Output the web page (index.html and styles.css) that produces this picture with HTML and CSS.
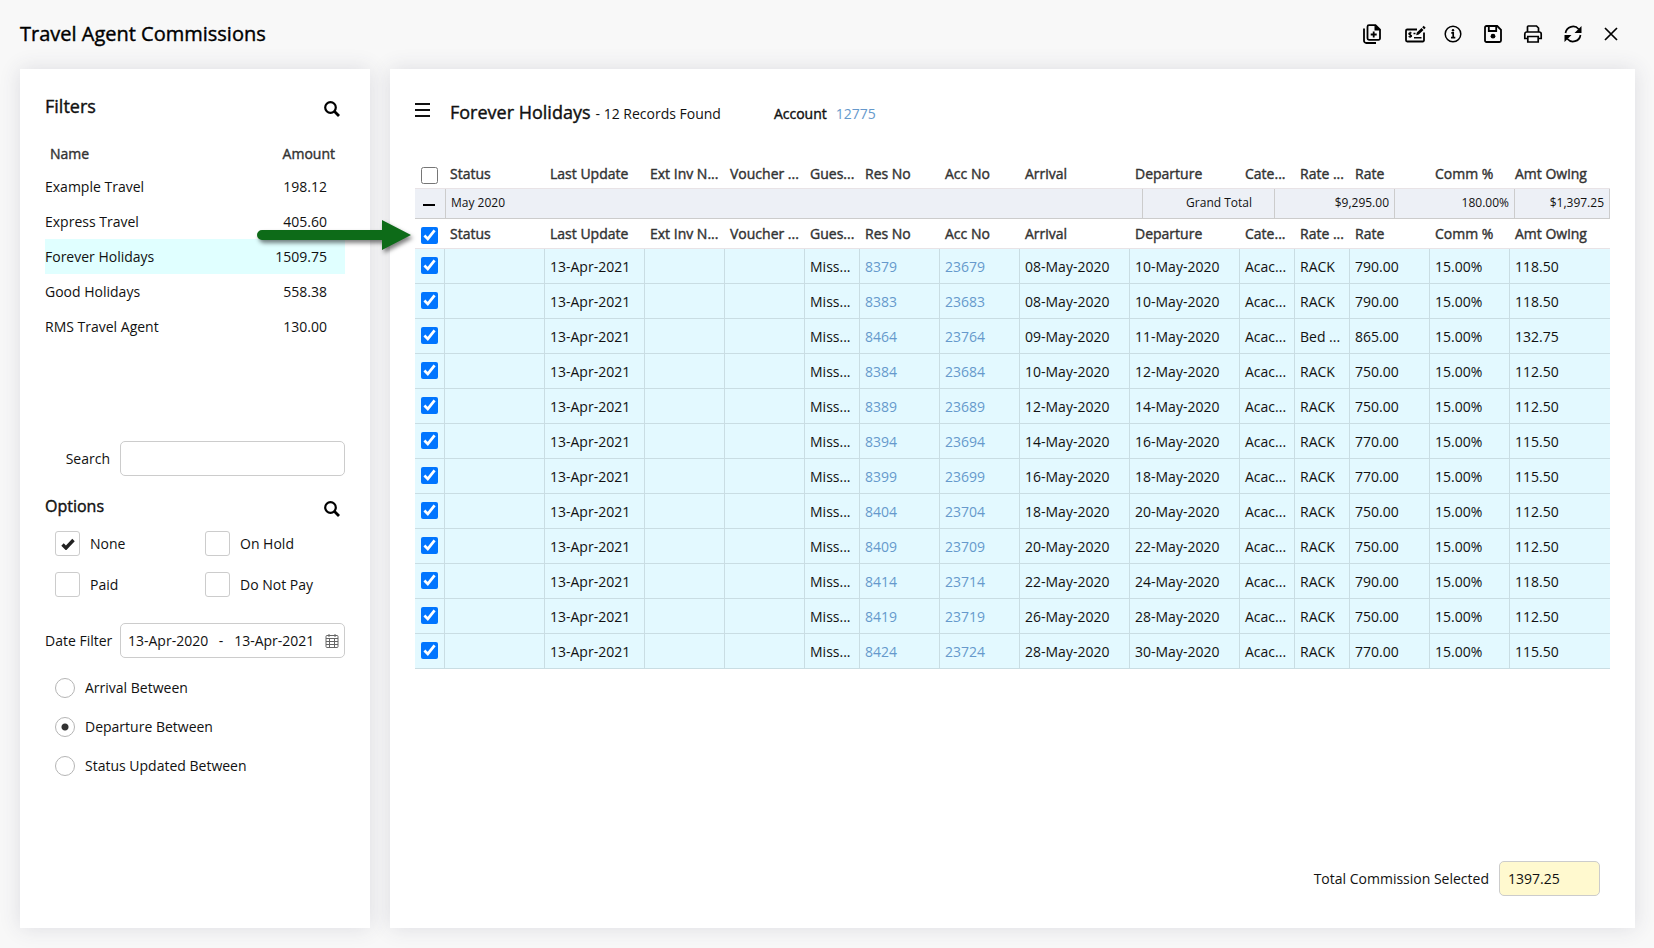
FILE: index.html
```html
<!DOCTYPE html>
<html lang="en">
<head>
  <meta charset="UTF-8" />
  <meta name="viewport" content="width=device-width, initial-scale=1.0" />
  <title>Travel Agent Commissions</title>
  <link rel="stylesheet" href="styles.css">
</head>
<body>
  <header class="topbar">
    <h1>Travel Agent Commissions</h1>
    <div class="toolbar">
      <button type="button" class="icon-btn" aria-label="Add report">
        <svg width="22" height="22" viewBox="0 0 22 22" fill="none" stroke="#000" stroke-width="1.800">
          <path d="M7 2.200h6.500L18 6.700v8.600a1.500 1.500 0 0 1-1.500 1.500H7a1.500 1.500 0 0 1-1.500-1.500V3.700A1.500 1.500 0 0 1 7 2.200z" />
          <path d="M12.500 2v5.500h6z" fill="#000" stroke="none" />
          <path d="M11.700 8.500v6M8.700 11.500h6" />
          <path d="M2 5.500v12A2.300 2.300 0 0 0 4.300 20H14" />
        </svg>
      </button>
      <button type="button" class="icon-btn" aria-label="Write cheque">
        <svg width="22" height="22" viewBox="-2 0 22 22" fill="none" stroke="#000" stroke-width="1.800">
          <path d="M13 6.500H3.200A1.200 1.200 0 0 0 2 7.700v9.600a1.200 1.200 0 0 0 1.200 1.200h15.600a1.200 1.200 0 0 0 1.200-1.200V9.500" />
          <path d="M7.600 10.200c-.5-.5-2.800-.6-2.800.6 0 1.300 2.800.7 2.800 2.100 0 1.200-2.300 1.200-3 .5M6.200 8.800v6" stroke-width="1.200" />
          <path d="M9.500 10.500h2M10 14.700h7.500" stroke-width="1.600" />
          <path d="M12.200 12.200l.6-2.600 4.700-4.700 2 2-4.700 4.700zM18.200 4.200l1.500-1.500 2 2-1.500 1.500z" fill="#000" stroke="none" />
        </svg>
      </button>
      <button type="button" class="icon-btn" aria-label="Information">
        <svg width="22" height="22" viewBox="0 0 22 22" fill="none" stroke="#000" stroke-width="1.500">
          <circle cx="11" cy="11" r="7.800" />
          <path d="M9.300 9.800h1.900v4.700M9 14.700h4.300" stroke-width="1.700" />
          <circle cx="11" cy="7.200" r="1.200" fill="#000" stroke="none" />
        </svg>
      </button>
      <button type="button" class="icon-btn" aria-label="Save">
        <svg width="22" height="22" viewBox="0 0 22 22" fill="none" stroke="#000" stroke-width="1.800">
          <path d="M4.500 3h10.700L19 6.800v10.700a1.500 1.500 0 0 1-1.500 1.500h-13A1.500 1.500 0 0 1 3 17.500v-13A1.500 1.500 0 0 1 4.500 3z" />
          <path d="M6.800 3v5h7.400V3" />
          <circle cx="11" cy="13.200" r="2.400" fill="#000" stroke="none" />
        </svg>
      </button>
      <button type="button" class="icon-btn" aria-label="Print">
        <svg width="22" height="22" viewBox="0 0 22 22" fill="none" stroke="#000" stroke-width="1.700">
          <path d="M5.500 9V3.800A.8.8 0 0 1 6.300 3h8.200l2 2v4" />
          <path d="M5.500 15.500H2.800V11A2 2 0 0 1 4.800 9h12.400a2 2 0 0 1 2 2v4.500h-2.700" />
          <path d="M5.800 13.500h10.400V19H5.800z" />
        </svg>
      </button>
      <button type="button" class="icon-btn" aria-label="Refresh">
        <svg width="22" height="22" viewBox="0 0 22 22" fill="none" stroke="#000" stroke-width="1.700">
          <path d="M3.500 10A7.600 7.600 0 0 1 16.800 6.200M18.500 12A7.600 7.600 0 0 1 5.200 15.800" />
          <path d="M19.500 3v7h-7zM2.500 19v-7h7z" fill="#000" stroke="none" />
        </svg>
      </button>
      <button type="button" class="icon-btn" aria-label="Close">
        <svg width="18" height="22" viewBox="0 0 18 22" fill="none" stroke="#000" stroke-width="1.700">
          <path d="M3 5l12 12M15 5L3 17" />
        </svg>
      </button>
    </div>
  </header>

  <main class="layout">
    <aside class="panel filters">
      <div class="panel-head">
        <h2>Filters</h2>
        <button type="button" class="icon-btn" aria-label="Search filters">
          <svg width="16" height="16" viewBox="0 0 16 16" fill="none" stroke="#000">
            <circle cx="6.500" cy="6.500" r="5.300" stroke-width="2.200" />
            <path d="M10.300 10.300l4.700 4.700" stroke-width="2.800" />
          </svg>
        </button>
      </div>

      <div class="agents">
        <table class="agent-table">
          <thead>
            <tr><th>Name</th><th>Amount</th></tr>
          </thead>
          <tbody>
            <tr><td>Example Travel</td><td>198.12</td></tr>
            <tr><td>Express Travel</td><td>405.60</td></tr>
            <tr class="selected"><td>Forever Holidays</td><td>1509.75</td></tr>
            <tr><td>Good Holidays</td><td>558.38</td></tr>
            <tr><td>RMS Travel Agent</td><td>130.00</td></tr>
          </tbody>
        </table>
      </div>

      <div class="field">
        <label class="search-label" for="search">Search</label>
        <input type="text" id="search" class="text-input" />
      </div>

      <div class="panel-head options-head">
        <h3>Options</h3>
        <button type="button" class="icon-btn" aria-label="Search options">
          <svg width="16" height="16" viewBox="0 0 16 16" fill="none" stroke="#000">
            <circle cx="6.500" cy="6.500" r="5.300" stroke-width="2.200" />
            <path d="M10.300 10.300l4.700 4.700" stroke-width="2.800" />
          </svg>
        </button>
      </div>

      <div class="options">
        <label><input type="checkbox" class="box" checked />None</label>
        <label><input type="checkbox" class="box" />On Hold</label>
        <label><input type="checkbox" class="box" />Paid</label>
        <label><input type="checkbox" class="box" />Do Not Pay</label>
      </div>

      <div class="field">
        <label for="date-from">Date Filter</label>
        <div class="date-range">
          <input type="text" id="date-from" value="13-Apr-2020" />
          <span>-</span>
          <input type="text" id="date-to" aria-label="Date to" value="13-Apr-2021" />
          <button type="button" class="icon-btn" aria-label="Open calendar">
            <svg width="14" height="16" viewBox="0 0 14 16" fill="none" stroke="#666">
              <path d="M2 2.500h10a1 1 0 0 1 1 1v10a1 1 0 0 1-1 1H2a1 1 0 0 1-1-1v-10a1 1 0 0 1 1-1zM1 5.500h12M1 8.500h12M1 11.500h12M4.500 5.500v9M9.500 5.500v9" />
              <path d="M4 1v3M10 1v3" />
            </svg>
          </button>
        </div>
      </div>

      <div class="radios">
        <label><input type="radio" name="between" />Arrival Between</label>
        <label><input type="radio" name="between" checked />Departure Between</label>
        <label><input type="radio" name="between" />Status Updated Between</label>
      </div>
    </aside>

    <section class="panel results">
      <div class="results-head">
        <button type="button" class="icon-btn" aria-label="Menu">
          <svg width="15" height="16" viewBox="0 0 15 16" stroke="#111" stroke-width="2">
            <path d="M0 1h15M0 7h15M0 13h15" />
          </svg>
        </button>
        <h2>Forever Holidays</h2>
        <span class="found">- 12 Records Found</span>
        <span class="account">Account</span>
        <a href="#">12775</a>
      </div>

      <table class="grid" id="grid-head">
        <thead></thead>
      </table>

      <table class="group">
        <tr>
          <td class="g-toggle">
            <button type="button" class="icon-btn" aria-label="Collapse group">
              <svg width="12" height="12" viewBox="0 0 12 12" stroke="#000" stroke-width="2"><path d="M0 7h12" /></svg>
            </button>
          </td>
          <td>May 2020</td>
          <td class="g-label">Grand Total</td>
          <td class="g-sum">$9,295.00</td>
          <td class="g-sum">180.00%</td>
          <td class="g-owing">$1,397.25</td>
        </tr>
      </table>

      <div class="group-body">
        <table class="grid" id="grid">
          <thead></thead>
          <tbody></tbody>
        </table>
        <svg class="arrow" width="166" height="42" viewBox="0 0 166 42">
          <path d="M9 14H129V4L158 19L129 34V24H9A5 5 0 0 1 9 14z" fill="#0d6b18" />
        </svg>
      </div>

      <div class="total">
        <label for="total">Total Commission Selected</label>
        <input type="text" id="total" class="text-input" value="1397.25" readonly />
      </div>
    </section>
  </main>

  <script>
    const columns = [
      ["Status", "w100"], ["Last Update", "w100"], ["Ext Inv N...", "w80"], ["Voucher ...", "w80"],
      ["Gues...", "w55"], ["Res No", "w80"], ["Acc No", "w80"], ["Arrival", "w110"],
      ["Departure", "w110"], ["Cate...", "w55"], ["Rate ...", "w55"], ["Rate", "w80"],
      ["Comm %", "w80"], ["Amt Owing", "w100"]
    ];

    // res no, acc no, arrival, departure, rate type, rate, owing
    const records = [
      [8379, 23679, "08-May-2020", "10-May-2020", "RACK", "790.00", "118.50"],
      [8383, 23683, "08-May-2020", "10-May-2020", "RACK", "790.00", "118.50"],
      [8464, 23764, "09-May-2020", "11-May-2020", "Bed ...", "865.00", "132.75"],
      [8384, 23684, "10-May-2020", "12-May-2020", "RACK", "750.00", "112.50"],
      [8389, 23689, "12-May-2020", "14-May-2020", "RACK", "750.00", "112.50"],
      [8394, 23694, "14-May-2020", "16-May-2020", "RACK", "770.00", "115.50"],
      [8399, 23699, "16-May-2020", "18-May-2020", "RACK", "770.00", "115.50"],
      [8404, 23704, "18-May-2020", "20-May-2020", "RACK", "750.00", "112.50"],
      [8409, 23709, "20-May-2020", "22-May-2020", "RACK", "750.00", "112.50"],
      [8414, 23714, "22-May-2020", "24-May-2020", "RACK", "790.00", "118.50"],
      [8419, 23719, "26-May-2020", "28-May-2020", "RACK", "750.00", "112.50"],
      [8424, 23724, "28-May-2020", "30-May-2020", "RACK", "770.00", "115.50"]
    ];

    function headRow(checked) {
      let row = `<tr><th class="w30"><input type="checkbox" aria-label="Select all" ${checked ? "checked" : ""}></th>`;
      columns.forEach(([name, width]) => row += `<th class="${width}">${name}</th>`);
      return row + "</tr>";
    }

    document.querySelector("#grid-head thead").innerHTML = headRow(false);
    document.querySelector("#grid thead").innerHTML = headRow(true);

    document.querySelector("#grid tbody").innerHTML = records.map(r => `
      <tr>
        <td><input type="checkbox" aria-label="Select ${r[0]}" checked></td>
        <td></td><td>13-Apr-2021</td><td></td><td></td><td>Miss...</td>
        <td><a href="#">${r[0]}</a></td><td><a href="#">${r[1]}</a></td>
        <td>${r[2]}</td><td>${r[3]}</td><td>Acac...</td><td>${r[4]}</td>
        <td>${r[5]}</td><td>15.00%</td><td>${r[6]}</td>
      </tr>`).join("");
  </script>
</body>
</html>
```

FILE: styles.css
```css
* {
  box-sizing: border-box;
}

body {
  margin: 0;
  padding: 0 19px 20px 20px;
  min-height: 100vh;
  display: flex;
  flex-direction: column;
  background-color: #f8f8f8;
  font-family: "Open Sans", sans-serif;
  font-size: 14px;
  line-height: 20px;
  color: #111;
}

h1, h2, h3 {
  margin: 0;
  font-weight: 400;
  color: #111;
}

h1, h2, h3, th, .account {
  -webkit-text-stroke: 0.4px currentColor;
}

h1 {
  font-size: 20px;
  color: #000;
}

h2 {
  font-size: 18px;
}

h3 {
  font-size: 16px;
}

a {
  color: #6699cc;
  text-decoration: none;
}

input {
  font: inherit;
  color: inherit;
}

table {
  width: 100%;
  border-spacing: 0;
  table-layout: fixed;
}

th {
  font-weight: 400;
  text-align: left;
  color: #333;
}

.icon-btn {
  display: flex;
  padding: 0;
  border: none;
  background: none;
  cursor: pointer;
}

.icon-btn svg {
  overflow: visible;
}

.topbar {
  display: flex;
  justify-content: space-between;
  align-items: center;
  height: 69px;
  padding: 0 15px 2px 0;
}

.toolbar {
  display: flex;
  gap: 18px;
}

.layout {
  flex: 1;
  display: flex;
  gap: 20px;
}

.panel {
  background-color: white;
  padding: 25px;
  box-shadow: 0 0 20px rgba(60, 60, 90, 0.14);
}

/* filters */

.filters {
  flex: 0 0 350px;
}

.panel-head {
  display: flex;
  justify-content: space-between;
  align-items: center;
  height: 24px;
  padding-right: 5px;
}

.panel-head .icon-btn {
  margin-top: 6px;
}

.agents {
  height: 302px;
  margin-top: 21px;
}

.agent-table th {
  height: 30px;
  padding: 0 5px;
}

.agent-table td {
  height: 35px;
  padding: 0;
}

.agent-table th:last-child {
  text-align: right;
  padding-right: 10px;
}

.agent-table td:last-child {
  text-align: right;
  padding-right: 18px;
}

.agent-table .selected {
  background-color: #e0ffff;
}

.field {
  display: flex;
  justify-content: space-between;
  align-items: center;
}

.search-label {
  flex: 1;
  text-align: right;
  padding-right: 10px;
}

.text-input,
.date-range {
  width: 225px;
  height: 35px;
  padding: 0 8px;
  border: 1px solid #ccc;
  border-radius: 5px;
  background-color: white;
}

.options-head {
  margin: 18px 0 13px;
}

.options {
  display: grid;
  grid-template-columns: 150px 1fr;
  gap: 16px 0;
  padding-left: 10px;
  margin-bottom: 26px;
}

.options label,
.radios label {
  display: flex;
  align-items: center;
  gap: 10px;
}

.box {
  appearance: none;
  width: 25px;
  height: 25px;
  margin: 0;
  border: 1px solid #ccc;
  border-radius: 3px;
}

.box:checked {
  background: url("data:image/svg+xml,%3Csvg xmlns='http://www.w3.org/2000/svg' width='14' height='12' viewBox='0 0 14 12'%3E%3Cpath d='M1.500 6.500l3.500 3.500L12.500 2' fill='none' stroke='%23222' stroke-width='3.400'/%3E%3C/svg%3E") center no-repeat;
}

.date-range {
  display: flex;
  align-items: center;
  justify-content: space-between;
  padding: 0 5px 0 7px;
}

.date-range input {
  width: 80px;
  padding: 0;
  border: none;
  outline: none;
  background: none;
}

.radios {
  display: flex;
  flex-direction: column;
  gap: 19px;
  padding: 20px 0 0 10px;
}

.radios input {
  appearance: none;
  width: 20px;
  height: 20px;
  margin: 0;
  border: 1px solid #b5b5b5;
  border-radius: 50%;
}

.radios input:checked {
  background: radial-gradient(circle, #333 3px, transparent 4px);
}

/* results */

.results {
  flex: 1;
  min-width: 0;
  display: flex;
  flex-direction: column;
}

.results-head {
  display: flex;
  align-items: baseline;
  height: 65px;
  padding-top: 8px;
}

.results-head h2 {
  margin: 0 5px 0 20px;
}

.account {
  margin: 0 9px 0 53px;
}

.w30 { width: 30px; }
.w55 { width: 55px; }
.w80 { width: 80px; }
.w100 { width: 100px; }
.w110 { width: 110px; }

.grid th,
.grid td {
  padding: 0 5px;
  overflow: hidden;
  white-space: nowrap;
}

.grid th {
  height: 30px;
  border-bottom: 1px solid #e8e3e6;
}

.grid td {
  height: 35px;
  padding-top: 2px;
  background-color: #e3f9ff;
  border-right: 1px solid #c9dde3;
  border-bottom: 1px solid #c9dde3;
}

.grid td:last-child {
  border-right: none;
}

.grid th:first-child,
.grid td:first-child {
  padding: 0 0 0 6px;
}

.grid input {
  display: block;
  width: 17px;
  height: 17px;
  margin: 3px 0 0;
}

.grid td input {
  margin: 0 0 2px;
}

.group td {
  height: 30px;
  padding: 0 5px 2px;
  font-size: 12px;
  background-color: #edf0f6;
  border-right: 1px solid #ccc;
  border-bottom: 1px solid #ccc;
}

.group .g-toggle {
  width: 31px;
  padding: 0 0 0 8px;
}

.group .g-label {
  width: 132px;
  text-align: right;
  padding-right: 22px;
}

.group .g-sum {
  width: 120px;
  text-align: right;
}

.group .g-owing {
  width: 95px;
  text-align: right;
}

.group-body {
  position: relative;
}

/* pointer from the agent list to the group checkbox */
.arrow {
  position: absolute;
  top: -3px;
  left: -162px;
  filter: drop-shadow(2px 3px 2px rgba(0, 0, 0, 0.5));
  pointer-events: none;
}

.total {
  display: flex;
  justify-content: flex-end;
  align-items: center;
  gap: 10px;
  margin-top: auto;
  padding: 0 10px 7px 0;
}

.total .text-input {
  width: 101px;
  background-color: #fff9cf;
}
```
